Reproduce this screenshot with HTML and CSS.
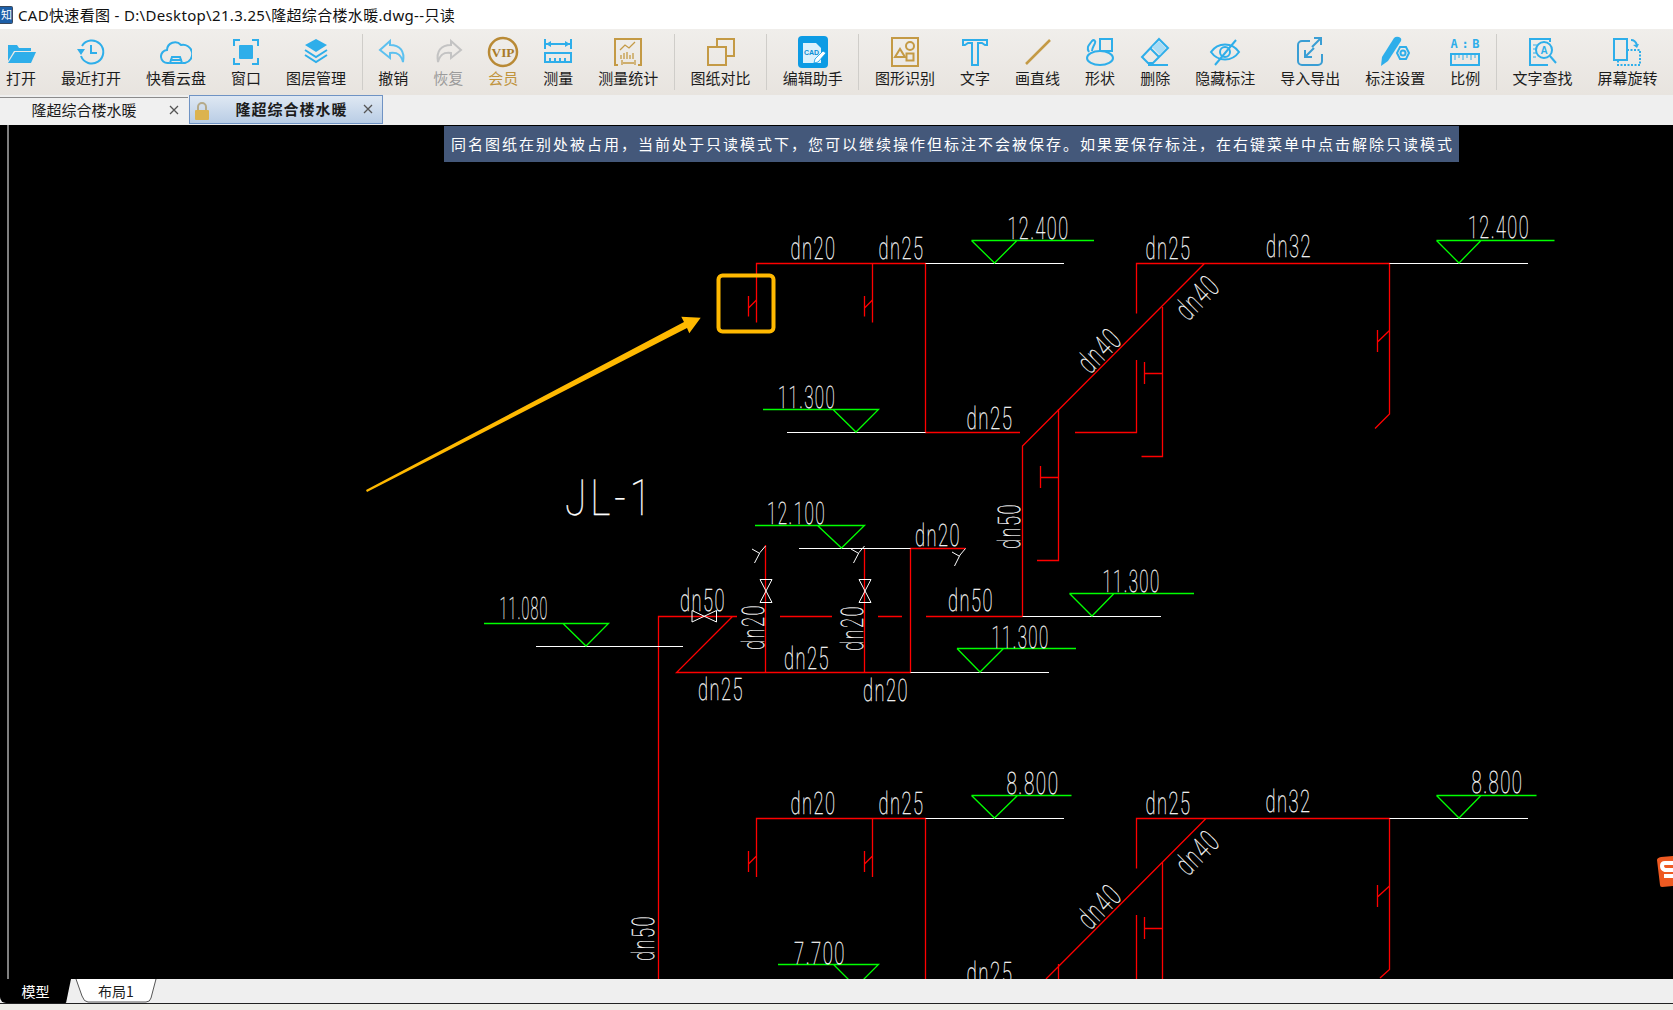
FILE: index.html
```html
<!DOCTYPE html>
<html lang="zh-CN">
<head>
<meta charset="utf-8">
<title>CAD快速看图</title>
<link rel="stylesheet" href="styles.css">
</head>
<body>
<div class="app">
  <header class="titlebar">
    <svg class="app-icon" viewBox="0 0 13 18"><rect x="-3" y="0.500" width="15.500" height="17" rx="1" fill="#1d5fa8" stroke="#39485c"/><text x="6.500" y="13" class="app-icon-text">知</text></svg>
    <span class="title-text">CAD快速看图 - D:\Desktop\21.3.25\隆超综合楼水暖.dwg--只读</span>
  </header>

  <nav class="toolbar">
    <div class="tool"><svg class="ico" viewBox="0 0 32 32"><path class="fb" d="M3 9h9l2 3h12v3H9L3 25z"/><path class="fb" d="M10 16h21l-5 11H3z"/></svg><span>打开</span></div>
    <div class="tool"><svg class="ico" viewBox="0 0 32 32"><path class="sb" d="M7 10A11.500 11.500 0 1 1 6 20"/><path class="fb" d="M2 13h8l-4 6z"/><path class="sb" d="M16 9v8h6"/></svg><span>最近打开</span></div>
    <div class="tool"><svg class="ico" viewBox="0 0 32 32"><path class="sb" d="M9 27h-1a6.500 6.500 0 0 1-1-13A8 8 0 0 1 21 9a7 7 0 0 1 4 18h-2"/><path class="sb" d="M10 27l2-6h8l2 6zM10 24h12"/></svg><span>快看云盘</span></div>
    <div class="tool"><svg class="ico" viewBox="0 0 32 32"><rect class="fb" x="9" y="9" width="14" height="14" rx="1"/><path class="sb" d="M4 10V4h6M22 4h6v6M28 22v6h-6M10 28H4v-6"/></svg><span>窗口</span></div>
    <div class="tool"><svg class="ico" viewBox="0 0 32 32"><path class="fb" d="M16 3l11 6-11 7L5 9z"/><path class="sb" d="M5 14l11 7 11-7M5 19l11 7 11-7"/></svg><span>图层管理</span></div>
    <i class="sep"></i>
    <div class="tool"><svg class="ico" viewBox="0 0 32 32"><path class="sl" d="M13 5L3 14l10 8v-5c7-1 11 1 13 9 2-11-3-17-13-17z"/></svg><span>撤销</span></div>
    <div class="tool dim"><svg class="ico" viewBox="0 0 32 32"><path class="sg" d="M19 5l10 9-10 8v-5c-7-1-11 1-13 9-2-11 3-17 13-17z"/></svg><span>恢复</span></div>
    <div class="tool vip"><svg class="ico" viewBox="0 0 32 32"><circle class="sv" cx="16" cy="16" r="14"/><text x="16" y="20.500" class="vip-text" textLength="23" lengthAdjust="spacingAndGlyphs">VIP</text></svg><span>会员</span></div>
    <div class="tool"><svg class="ico" viewBox="0 0 32 32"><path class="sb" d="M3 3v10M29 3v10M4 8h24M3 17h26v9H3zM8 22v4M13 22v4M18 22v4M23 22v4"/><path class="fb" d="M4 8l5-3v6zM28 8l-5-3v6z"/></svg><span>测量</span></div>
    <div class="tool"><svg class="ico" viewBox="0 0 32 32"><path class="sy" d="M6 29H3V3h26v26h-3"/><path class="sy1" d="M8 14l5-5 4 3 6-6M9 23v-4M12 23v-6M15 23v-7M18 23v-4M21 23v-6M10 24v5M23 24v5M11 27h11"/></svg><span>测量统计</span></div>
    <i class="sep"></i>
    <div class="tool"><svg class="ico" viewBox="0 0 32 32"><path class="sy" d="M12 11V3h17v17h-8"/><rect class="sy" x="3" y="11" width="18" height="18"/></svg><span>图纸对比</span></div>
    <i class="sep"></i>
    <div class="tool"><svg class="ico" viewBox="0 0 32 32"><rect x="1" y="0" width="30" height="32" rx="4" class="fb-grad"/><path class="doc" d="M6 7h13l5 5v15H6z"/><text x="14.500" y="19" class="cad-text">CAD</text><path class="pen" d="M17 27l1-4 8-8 3 2-8 9z"/></svg><span>编辑助手</span></div>
    <i class="sep"></i>
    <div class="tool"><svg class="ico" viewBox="0 0 32 32"><rect class="sy" x="3" y="2" width="26" height="28"/><path class="sy" d="M6 21l5-8 5 8z"/><circle class="sy" cx="21" cy="10" r="4"/><rect class="sy" x="17.500" y="17.500" width="7" height="7"/></svg><span>图形识别</span></div>
    <div class="tool"><svg class="ico" viewBox="0 0 32 32"><path class="sb" d="M4 9V4h24v5h-2l-3-2h-4v22h-6V7H9L6 9z"/></svg><span>文字</span></div>
    <div class="tool"><svg class="ico" viewBox="0 0 32 32"><path class="sy-line" d="M4 28L28 4"/></svg><span>画直线</span></div>
    <div class="tool"><svg class="ico" viewBox="0 0 32 32"><rect class="sb" x="16" y="3" width="12" height="12"/><ellipse class="sb" cx="16" cy="22" rx="13" ry="7"/><path class="sb" d="M5 16c-3-5 0-7 3-11 2-2 4 0 3 2-1 3-3 5-3 8"/></svg><span>形状</span></div>
    <div class="tool"><svg class="ico" viewBox="0 0 32 32"><path class="sb" d="M20 3l9 9-15 15H9l-6-6zM11 12l9 9M9 29h20"/><path class="fl" d="M20 5l7 7-6 7-8-8z"/></svg><span>删除</span></div>
    <div class="tool"><svg class="ico" viewBox="0 0 32 32"><path class="sb" d="M2 16c7-10 21-10 28 0-7 10-21 10-28 0z"/><circle class="sb" cx="16" cy="16" r="5"/><path class="sb" d="M6 29L27 4"/></svg><span>隐藏标注</span></div>
    <div class="tool"><svg class="ico" viewBox="0 0 32 32"><path class="sbd" d="M16 5H8a4 4 0 0 0-4 4v16a4 4 0 0 0 4 4h16a4 4 0 0 0 4-4V18"/><path class="sbd" d="M20 2h7v7M27 2l-9 9M11 14v7h7M11 21l9-9"/></svg><span>导入导出</span></div>
    <div class="tool"><svg class="ico" viewBox="0 0 32 32"><path class="fb" d="M2 30l1-9L15 2q2-2 5-1t2 4L9 25z"/><path class="sb" d="M21 11h6l3 6-3 6h-6l-3-6z"/><circle class="sb" cx="24" cy="17" r="2.500"/></svg><span>标注设置</span></div>
    <div class="tool"><svg class="ico" viewBox="0 0 32 32"><text x="16" y="12" class="ab-text" textLength="29" lengthAdjust="spacing">A:B</text><rect class="sb" x="2" y="18" width="28" height="11"/><path class="sb1" d="M6 19v5M10 19v3M14 19v5M18 19v3M22 19v5M26 19v3"/></svg><span>比例</span></div>
    <i class="sep"></i>
    <div class="tool"><svg class="ico" viewBox="0 0 32 32"><path class="sb" d="M24 6V3H4v26h18"/><path class="sb1" d="M7 9h4M7 13h3M7 17h3M7 21h3"/><circle class="sb" cx="18" cy="14" r="8"/><path class="sb" d="M24 20l6 7"/><text x="18" y="18" class="find-text">A</text></svg><span>文字查找</span></div>
    <div class="tool"><svg class="ico" viewBox="0 0 32 32"><rect class="sb" x="3" y="3" width="13" height="21"/><path class="sb-dash" d="M16 14h13v15H7v-5"/><path class="sb" d="M20 4c3 0 5 2 6 5"/><path class="fb" d="M22 9l6-1-2 4z"/></svg><span>屏幕旋转</span></div>
  </nav>

  <div class="tabstrip">
    <div class="tab"><span class="tab-label">隆超综合楼水暖</span><svg class="tab-x" viewBox="0 0 10 10"><path d="M1 1l8 8M9 1l-8 8"/></svg></div>
    <div class="tab active">
      <svg class="lock" viewBox="0 0 16 20"><path class="shackle" d="M4 10V6a4 4 0 0 1 8 0v4"/><rect x="1" y="9" width="14" height="10" rx="1" class="lock-body"/></svg>
      <span class="tab-label">隆超综合楼水暖</span><svg class="tab-x" viewBox="0 0 10 10"><path d="M1 1l8 8M9 1l-8 8"/></svg>
    </div>
  </div>

  <main class="canvas">
    <svg class="drawing" viewBox="0 125 1673 854" preserveAspectRatio="none">
      <path class="w" d="M8 125V979"/>
      <g class="r">
        <path d="M756.500 322.500V263.500H925.500V432.500H1020M872.500 263.500V322.500"/>
        <path d="M748.500 296V316.500M748.500 308L756.500 300M864.500 296V316.500M864.500 308L872.500 300"/>
        <path d="M1136.500 313.500V263.500H1389.500V414L1375 428.500M1204.500 263.500L1022.500 446V616.500"/>
        <path d="M1162.500 307V456.500H1141.500M1136.500 360V432.500H1075M1144.500 362V384M1144.500 373.500H1162.500"/>
        <path d="M1058.500 409V560.500H1037M1040.500 466V488M1040.500 477.500H1058.500"/>
        <path d="M1377.500 330V352M1377.500 342L1389.500 330.500"/>
        <path d="M658.500 979V616.500H737M732.500 616.500L676.500 672.500H910.500V548.500H965.500M765.500 545V672.500M864.500 548V672.500"/>
        <path d="M780 616.500H832M878 616.500H902M926 616.500H1022.500"/>
        <path d="M756.500 877V818.500H925.500V979M872.500 818.500V877M748.500 851V872M748.500 864L756.500 856M864.500 851V872M864.500 864L872.500 856"/>
        <path d="M1136.500 868.500V818.500H1389.500V969.500L1380 978M1206 818.500L1046 979M1162.500 862.500V979M1136.500 915V979M1144.500 917V939M1144.500 928.500H1162.500M1058.500 964V979"/>
        <path d="M1377.500 885V907M1377.500 897L1389.500 886"/>
      </g>
      <g class="w">
        <path d="M925.500 263.500H1064M787 432.500H925.500M1389.500 263.500H1528M536 646.500H683M799 548.500H910.500M1022.500 616.500H1161M910.500 672.500H1049M925.500 818.500H1064M1389.500 818.500H1528"/>
        <path d="M760 579.500H772L760 602.500H772ZM859 579.500H871L859 602.500H871ZM692 610.500V622L716.500 610.500V622Z"/>
        <path d="M754.500 563L760 552.500L765.500 546M752 549L759 553M853.500 563L859 552.500L864.500 546M851 549L858 553M954.500 566L960 555L965.500 548.500M952 552L959 556"/>
      </g>
      <g class="g">
        <path d="M971.500 240.500H1094M971.500 240.500L994.500 263L1017 240.500M1436.500 240.500H1554.500M1436.500 240.500L1459 263L1481 240.500"/>
        <path d="M763 409.500H878.500L856 432L833 409.500M484 623.500H608.500L586 646L563 623.500M755 525.500H864.500L841.500 548L817.500 525.500"/>
        <path d="M1069.500 593.500H1194M1069.500 593.500L1092 616L1114 593.500M957 648.500H1076M957 648.500L980 672L1003.500 648.500"/>
        <path d="M971.500 795.500H1071.500M971.500 795.500L994.500 818L1017.500 795.500M1436.500 795.500H1536.500M1436.500 795.500L1459 818L1481 795.500M778 964.500H878.500L856 987L833.500 964.500"/>
      </g>
      <g class="cad">
        <text x="790.500" y="259" textLength="46" lengthAdjust="spacingAndGlyphs">dn20</text>
        <text x="878.500" y="259" textLength="46" lengthAdjust="spacingAndGlyphs">dn25</text>
        <text x="1007.500" y="239" textLength="62" lengthAdjust="spacingAndGlyphs">12.400</text>
        <text x="1145.500" y="259" textLength="46" lengthAdjust="spacingAndGlyphs">dn25</text>
        <text x="1266" y="257" textLength="46" lengthAdjust="spacingAndGlyphs">dn32</text>
        <text x="1468" y="238" textLength="62" lengthAdjust="spacingAndGlyphs">12.400</text>
        <text x="778" y="408" textLength="58" lengthAdjust="spacingAndGlyphs">11.300</text>
        <text x="966.500" y="428.500" textLength="47" lengthAdjust="spacingAndGlyphs">dn25</text>
        <text x="499.500" y="619" textLength="49" lengthAdjust="spacingAndGlyphs">11.080</text>
        <text x="767" y="524" textLength="59" lengthAdjust="spacingAndGlyphs">12.100</text>
        <text x="915" y="545.500" textLength="46" lengthAdjust="spacingAndGlyphs">dn20</text>
        <text x="680" y="610.500" textLength="46" lengthAdjust="spacingAndGlyphs">dn50</text>
        <text x="948" y="611" textLength="46" lengthAdjust="spacingAndGlyphs">dn50</text>
        <text x="784" y="668.500" textLength="46" lengthAdjust="spacingAndGlyphs">dn25</text>
        <text x="698" y="700" textLength="46" lengthAdjust="spacingAndGlyphs">dn25</text>
        <text x="863" y="701" textLength="46" lengthAdjust="spacingAndGlyphs">dn20</text>
        <text x="1102.500" y="591.500" textLength="58" lengthAdjust="spacingAndGlyphs">11.300</text>
        <text x="991.500" y="648" textLength="58" lengthAdjust="spacingAndGlyphs">11.300</text>
        <text x="790.500" y="814" textLength="46" lengthAdjust="spacingAndGlyphs">dn20</text>
        <text x="878.500" y="814" textLength="46" lengthAdjust="spacingAndGlyphs">dn25</text>
        <text x="1006.500" y="793.500" textLength="53" lengthAdjust="spacingAndGlyphs">8.800</text>
        <text x="1145.500" y="813.500" textLength="46" lengthAdjust="spacingAndGlyphs">dn25</text>
        <text x="1265.500" y="812" textLength="46" lengthAdjust="spacingAndGlyphs">dn32</text>
        <text x="1471.500" y="792.500" textLength="52" lengthAdjust="spacingAndGlyphs">8.800</text>
        <text x="794" y="964" textLength="52" lengthAdjust="spacingAndGlyphs">7.700</text>
        <text x="966.500" y="984" textLength="47" lengthAdjust="spacingAndGlyphs">dn25</text>
        <text x="764" y="650" transform="rotate(-90 764 650)" textLength="46" lengthAdjust="spacingAndGlyphs">dn20</text>
        <text x="863" y="651" transform="rotate(-90 863 651)" textLength="46" lengthAdjust="spacingAndGlyphs">dn20</text>
        <text x="1020" y="549" transform="rotate(-90 1020 549)" textLength="46" lengthAdjust="spacingAndGlyphs">dn50</text>
        <text x="654" y="961" transform="rotate(-90 654 961)" textLength="46" lengthAdjust="spacingAndGlyphs">dn50</text>
        <text x="1090" y="375" transform="rotate(-45 1090 375)" textLength="48" lengthAdjust="spacingAndGlyphs">dn40</text>
        <text x="1188" y="322" transform="rotate(-45 1188 322)" textLength="48" lengthAdjust="spacingAndGlyphs">dn40</text>
        <text x="1090" y="931" transform="rotate(-45 1090 931)" textLength="48" lengthAdjust="spacingAndGlyphs">dn40</text>
        <text x="1188" y="877" transform="rotate(-45 1188 877)" textLength="48" lengthAdjust="spacingAndGlyphs">dn40</text>
        <text x="565" y="515" class="big" textLength="90" lengthAdjust="spacingAndGlyphs">JL-1</text>
      </g>
      <rect class="mark" x="718.500" y="275.500" width="55" height="56" rx="4"/>
      <polygon class="arrow" points="366,490 684,322 681.300,316.700 700.700,317.700 689.300,333.300 687,328 367,492"/>
    </svg>
    <div class="notice">同名图纸在别处被占用，当前处于只读模式下，您可以继续操作但标注不会被保存。如果要保存标注，在右键菜单中点击解除只读模式</div>
    <svg class="ime" viewBox="0 0 16 32"><path d="M4 1L16 0V30L5 31Q3 31 3 29L0 4Q0 2 4 1Z" class="ime-bg"/><path class="ime-s" d="M16 7H8Q5 7 5 10T8 14H16M16 20H7"/></svg>
  </main>

  <footer class="sheets">
    <div class="sheet model">模型</div>
    <div class="sheet layout"><svg class="sheet-shape" viewBox="0 0 82 24"><path d="M1 0L7 17Q9 23 13 23H71Q75 23 76 19L81 0"/></svg><span>布局1</span></div>
  </footer>
</div>
</body>
</html>
```

FILE: styles.css
```css
* { box-sizing: border-box; }
html, body { margin: 0; height: 100%; overflow: hidden; }
body { font-family: "Noto Sans", "Noto Sans CJK SC", sans-serif; color: #1c1c1c; background: #efefef; }
.app { display: flex; flex-direction: column; height: 100vh; }

.titlebar { height: 29px; flex: none; display: flex; align-items: center; background: #fff; gap: 5px; overflow: hidden; }
.app-icon { width: 13px; height: 18px; flex: none; }
.app-icon-text { font: 11px "Noto Sans CJK SC", sans-serif; fill: #fff; text-anchor: middle; }
.title-text { font-size: 15px; line-height: 28px; white-space: nowrap; color: #111; letter-spacing: .33px; }

.toolbar { height: 66px; flex: none; display: flex; gap: 25px; padding-left: 6px; align-items: stretch; background: linear-gradient(#f0eeeb, #e8e4df); }
.tool { display: flex; flex-direction: column; align-items: center; padding-top: 7px; font-size: 15px; line-height: 20px; white-space: nowrap; font-family: "Noto Sans CJK SC", sans-serif; }
.tool span { margin-top: -2px; }
.ico { width: 32px; height: 32px; margin: 0 -4px 2px; flex: none; }
.tool.dim { color: #9b9b9b; }
.tool.vip { color: #c0943e; }
.sep { width: 1px; margin: 5px -9.400px; background: #cfcdc9; flex: none; }

.fb { fill: #2eaeea; }
.fl { fill: #a9dcf5; }
.fb-grad { fill: #0d9be4; }
.sb, .sl, .sg, .sy, .sv, .sbd, .sb1, .sy1, .sb-dash, .sy-line { fill: none; stroke-width: 2; }
.sb { stroke: #2eaeea; }
.sb1 { stroke: #2eaeea; stroke-width: 1; }
.sbd { stroke: #3a9ed4; }
.sl { stroke: #5cc0ef; }
.sg { stroke: #c3c3c3; }
.sy { stroke: #c49a45; }
.sv { stroke: #b98a35; stroke-width: 2.500; }
.sy1 { stroke: #c49a45; stroke-width: 1.300; }
.sy-line { stroke: #c49a45; stroke-width: 2.500; }
.sb-dash { stroke: #2eaeea; stroke-dasharray: 2 1.500; }
.vip-text { font: bold 13px "Liberation Serif", serif; fill: #a97a28; text-anchor: middle; }
.doc { fill: #e8f6fd; opacity: .95; }
.cad-text { font: bold 7px "Liberation Sans", sans-serif; fill: #0d8ed4; text-anchor: middle; }
.pen { fill: #fff; stroke: #0d9be4; stroke-width: .8; }
.ab-text { font: bold 12px "DejaVu Sans Mono", monospace; fill: #2eaeea; text-anchor: middle; }
.find-text { font: bold 10px "Liberation Sans", sans-serif; fill: #2eaeea; text-anchor: middle; }

.tabstrip { height: 30px; flex: none; display: flex; align-items: flex-end; background: #efefef; padding-bottom: 1px; gap: 1px; }
.tab { position: relative; width: 188px; height: 27px; display: flex; align-items: center; justify-content: center; font-size: 15px; border-top: 1px solid #8b8b8b; background: #f0f0f0; font-family: "Noto Sans CJK SC", sans-serif; padding: 0 20px 3px 0; }
.tab.active { width: 194px; height: 29px; border: 1px solid #6f93c4; background: linear-gradient(#dfe8f3, #b9cde5); font-weight: 700; letter-spacing: 1px; padding: 0 6px 3px 17px; }
.tab-x { position: absolute; right: 9px; top: 50%; width: 10px; height: 10px; margin-top: -6px; fill: none; stroke: #555; stroke-width: 1.300; }
.lock { position: absolute; left: 4px; top: 5px; width: 16px; height: 20px; }
.shackle { fill: none; stroke: #b5aa8a; stroke-width: 2; }
.lock-body { fill: #dcb34e; }

.canvas { position: relative; flex: 1; background: #000; overflow: hidden; min-height: 0; }
.drawing { display: block; width: 100%; height: 100%; }
.w { fill: none; stroke: #fff; stroke-width: 1; }
.r { fill: none; stroke: #f00; stroke-width: 1.300; }
.g { fill: none; stroke: #0f0; stroke-width: 1.300; }
.cad { font-family: Roboto, "Liberation Sans", sans-serif; font-weight: 100; font-size: 31px; letter-spacing: 2.500px; fill: #fff; stroke: #fff; stroke-width: .3; text-rendering: geometricPrecision; }
.cad .big { font-size: 50px; letter-spacing: 5px; }
.mark { fill: none; stroke: #ffb900; stroke-width: 4; }
.arrow { fill: #ffb900; }
.notice { position: absolute; left: 444px; top: 1px; width: 1015px; height: 36px; background: #44587a; color: #fff; font-size: 15px; letter-spacing: 2px; line-height: 35px; padding-left: 7px; white-space: nowrap; font-family: "Noto Sans CJK SC", sans-serif; }
.ime { position: absolute; right: 0; top: 731px; width: 16px; height: 32px; }
.ime-bg { fill: #ee5a22; }
.ime-s { fill: none; stroke: #fff; stroke-width: 4; }

.sheets { height: 31px; flex: none; display: flex; align-items: flex-start; gap: 4px; background: #efefef; box-shadow: inset 0 -6px 0 #eeeee9, inset 0 -7px 0 #222; font-family: "Noto Sans CJK SC", sans-serif; font-size: 14px; }
.sheet { height: 24px; display: flex; align-items: center; justify-content: center; }
.model { width: 71px; background: #000; color: #fff; border-radius: 0 0 6px 6px; clip-path: polygon(0 0, 100% 0, 93% 100%, 0 100%); }
.layout { position: relative; width: 82px; }
.layout span { position: relative; }
.sheet-shape { position: absolute; inset: 0; width: 100%; height: 100%; fill: #fff; stroke: #555; stroke-width: 1; }
```
